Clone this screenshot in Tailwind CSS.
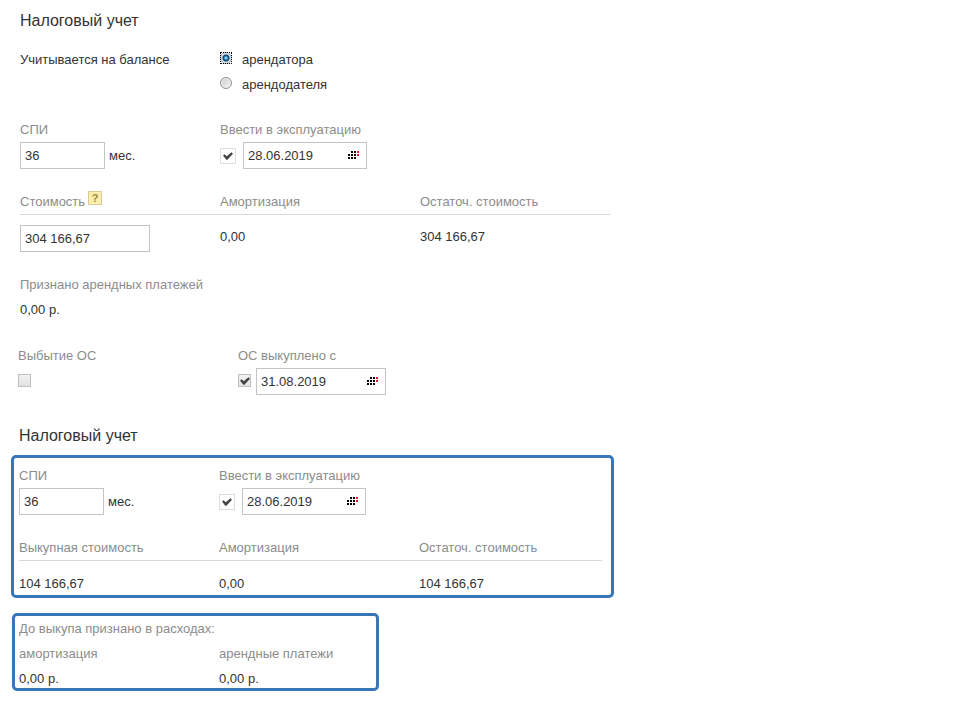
<!DOCTYPE html>
<html lang="ru">
<head>
    <meta charset="UTF-8">
    <meta name="viewport" content="width=device-width, initial-scale=1.0">
    <title>Налоговый учет</title>
    <script src="https://cdn.jsdelivr.net/npm/@tailwindcss/browser@4"></script>
</head>
<body class="bg-white font-['Liberation_Sans',Arial,sans-serif] text-[13px] leading-5 text-[#333]">
    <!-- Shared icons -->
    <svg class="hidden">
        <symbol id="calendar" viewBox="0 0 11 10">
            <path fill="#000" d="M3 0h2v2H3zM6 0h2v2H6zM0 3h2v2H0zM3 3h2v2H3zM6 3h2v2H6zM0 6h2v2H0zM3 6h2v2H3zM6 6h2v2H6z"/>
            <path fill="#f0142f" d="M9 0h2v2H9zM9 3h2v2H9z"/>
        </symbol>
        <symbol id="check" viewBox="0 0 10 8">
            <path fill="#444" d="M0 3.6 1.6 2.2 3.8 4.2 8.4.3 10 1.8 4.4 7.8H3.3z"/>
        </symbol>
    </svg>

    <main>
        <!-- Lessee / lessor accounting -->
        <section class="px-5 pt-[11px]">
            <h2 class="text-base leading-5">Налоговый учет</h2>

            <fieldset class="mt-[19px] flex">
                <legend class="contents"><span class="w-[200px] shrink-0">Учитывается на балансе</span></legend>
                <div class="flex flex-col gap-[5px]">
                    <label class="flex items-start gap-[10px]">
                        <span class="mt-[2px] block size-3 outline-1 -outline-offset-1 outline-dotted outline-black">
                            <input type="radio" name="balance" checked class="block size-3 appearance-none rounded-full border border-[#9aa5ae] bg-[radial-gradient(circle,#7fd0f5_0_1px,#1769a5_2px,#123a5c_3px,#dfe5ea_4px)] outline-none">
                        </span>
                        арендатора
                    </label>
                    <label class="flex items-start gap-[10px]">
                        <input type="radio" name="balance" class="mt-[2px] size-3 appearance-none rounded-full border border-[#8e8f8f] bg-[linear-gradient(135deg,#c9cccf,#f6f6f6)] shadow-[inset_0_0_0_1px_#f4f4f4]">
                        арендодателя
                    </label>
                </div>
            </fieldset>

            <div class="mt-[25px] flex">
                <div class="flex w-[200px] shrink-0 flex-col gap-[2px]">
                    <label for="term" class="text-[#8c8c8c]">СПИ</label>
                    <div class="flex items-center gap-1">
                        <input id="term" type="text" value="36" class="h-[27px] w-[85px] border border-[#c4c4c4] px-1">
                        <span>мес.</span>
                    </div>
                </div>
                <div class="flex flex-col gap-[2px]">
                    <label for="start" class="text-[#8c8c8c]">Ввести в эксплуатацию</label>
                    <div class="flex items-center gap-[7px]">
                        <span class="grid place-items-center">
                            <input type="checkbox" checked aria-label="Ввести в эксплуатацию" class="col-start-1 row-start-1 size-4 appearance-none border border-[#ddd]">
                            <svg class="pointer-events-none col-start-1 row-start-1 h-2 w-[10px]"><use href="#check"/></svg>
                        </span>
                        <div class="flex h-[27px] w-[124px] items-center border border-[#c4c4c4] pr-[7px] pl-1">
                            <input id="start" type="text" value="28.06.2019" class="min-w-0 flex-1">
                            <button type="button" aria-label="Календарь"><svg class="block h-[10px] w-[11px]"><use href="#calendar"/></svg></button>
                        </div>
                    </div>
                </div>
            </div>

            <table class="mt-[23px] w-full max-w-[590px] table-fixed text-left">
                <thead>
                    <tr class="border-b border-[#d9d9d9] text-[#8c8c8c]">
                        <th class="w-[200px] pb-[2px] font-normal">
                            <span class="flex gap-[3px]">Стоимость
                                <button type="button" aria-label="Справка" class="-mt-px flex size-[14px] items-center justify-center border border-[#d8cc9a] bg-[#fdeeae] text-[11px] leading-3 font-bold text-[#a08a35]">?</button>
                            </span>
                        </th>
                        <th class="w-[200px] pb-[2px] font-normal">Амортизация</th>
                        <th class="pb-[2px] font-normal">Остаточ. стоимость</th>
                    </tr>
                </thead>
                <tbody>
                    <tr class="align-top">
                        <td class="pt-[10px]"><input type="text" value="304 166,67" aria-label="Стоимость" class="block h-[27px] w-[130px] border border-[#c4c4c4] px-1"></td>
                        <td class="pt-3">0,00</td>
                        <td class="pt-3">304 166,67</td>
                    </tr>
                </tbody>
            </table>

            <dl class="mt-[23px] flex flex-col gap-[5px]">
                <dt class="text-[#8c8c8c]">Признано арендных платежей</dt>
                <dd>0,00 р.</dd>
            </dl>
        </section>

        <!-- Disposal -->
        <section class="mt-[26px] flex px-[18px]">
            <div class="flex w-[220px] shrink-0 flex-col gap-[2px]">
                <label for="disposal" class="text-[#8c8c8c]">Выбытие ОС</label>
                <div class="flex h-[27px] items-center pb-[2px]">
                    <input id="disposal" type="checkbox" class="size-[13px] appearance-none border border-[#c0c0c0] bg-linear-to-b from-[#f2f2f2] to-[#e2e2e2]">
                </div>
            </div>
            <div class="flex flex-col gap-[2px]">
                <label for="bought" class="text-[#8c8c8c]">ОС выкуплено с</label>
                <div class="flex items-center gap-[5px]">
                    <span class="grid place-items-center pb-[2px]">
                        <input type="checkbox" checked aria-label="ОС выкуплено" class="col-start-1 row-start-1 size-[13px] appearance-none border border-[#c0c0c0] bg-linear-to-b from-[#f2f2f2] to-[#e2e2e2]">
                        <svg class="pointer-events-none col-start-1 row-start-1 h-2 w-[10px]"><use href="#check"/></svg>
                    </span>
                    <div class="flex h-[27px] w-[130px] items-center border border-[#c4c4c4] pr-[7px] pl-1">
                        <input id="bought" type="text" value="31.08.2019" class="min-w-0 flex-1">
                        <button type="button" aria-label="Календарь"><svg class="block h-[10px] w-[11px]"><use href="#calendar"/></svg></button>
                    </div>
                </div>
            </div>
        </section>

        <!-- Accounting after buyout -->
        <section class="mt-[31px] px-[11px] pb-3">
            <h2 class="px-2 text-base leading-5">Налоговый учет</h2>

            <div class="mt-[9px] max-w-[603px] rounded-[5px] border-3 border-[#3776b9] px-[5px] pt-2 pb-px">
                <div class="flex">
                    <div class="flex w-[200px] shrink-0 flex-col gap-[2px]">
                        <label for="term2" class="text-[#8c8c8c]">СПИ</label>
                        <div class="flex items-center gap-1">
                            <input id="term2" type="text" value="36" class="h-[27px] w-[85px] border border-[#c4c4c4] px-1">
                            <span>мес.</span>
                        </div>
                    </div>
                    <div class="flex flex-col gap-[2px]">
                        <label for="start2" class="text-[#8c8c8c]">Ввести в эксплуатацию</label>
                        <div class="flex items-center gap-[7px]">
                            <span class="grid place-items-center">
                                <input type="checkbox" checked aria-label="Ввести в эксплуатацию" class="col-start-1 row-start-1 size-4 appearance-none border border-[#ddd]">
                                <svg class="pointer-events-none col-start-1 row-start-1 h-2 w-[10px]"><use href="#check"/></svg>
                            </span>
                            <div class="flex h-[27px] w-[124px] items-center border border-[#c4c4c4] pr-[7px] pl-1">
                                <input id="start2" type="text" value="28.06.2019" class="min-w-0 flex-1">
                                <button type="button" aria-label="Календарь"><svg class="block h-[10px] w-[11px]"><use href="#calendar"/></svg></button>
                            </div>
                        </div>
                    </div>
                </div>

                <table class="mt-[23px] w-full max-w-[583px] table-fixed text-left">
                    <thead>
                        <tr class="border-b border-[#d9d9d9] text-[#8c8c8c]">
                            <th class="w-[200px] pb-[2px] font-normal">Выкупная стоимость</th>
                            <th class="w-[200px] pb-[2px] font-normal">Амортизация</th>
                            <th class="pb-[2px] font-normal">Остаточ. стоимость</th>
                        </tr>
                    </thead>
                    <tbody>
                        <tr>
                            <td class="pt-[13px]">104 166,67</td>
                            <td class="pt-[13px]">0,00</td>
                            <td class="pt-[13px]">104 166,67</td>
                        </tr>
                    </tbody>
                </table>
            </div>

            <div class="mt-[15px] ml-px max-w-[367px] rounded-[5px] border-3 border-[#3776b9] px-1 pt-[3px] leading-[19px]">
                <p class="text-[#8c8c8c]">До выкупа признано в расходах:</p>
                <div class="mt-[6px] flex">
                    <dl class="flex w-[200px] shrink-0 flex-col gap-[6px]">
                        <dt class="text-[#8c8c8c]">амортизация</dt>
                        <dd>0,00 р.</dd>
                    </dl>
                    <dl class="flex flex-col gap-[6px]">
                        <dt class="text-[#8c8c8c]">арендные платежи</dt>
                        <dd>0,00 р.</dd>
                    </dl>
                </div>
            </div>
        </section>
    </main>
</body>
</html>
